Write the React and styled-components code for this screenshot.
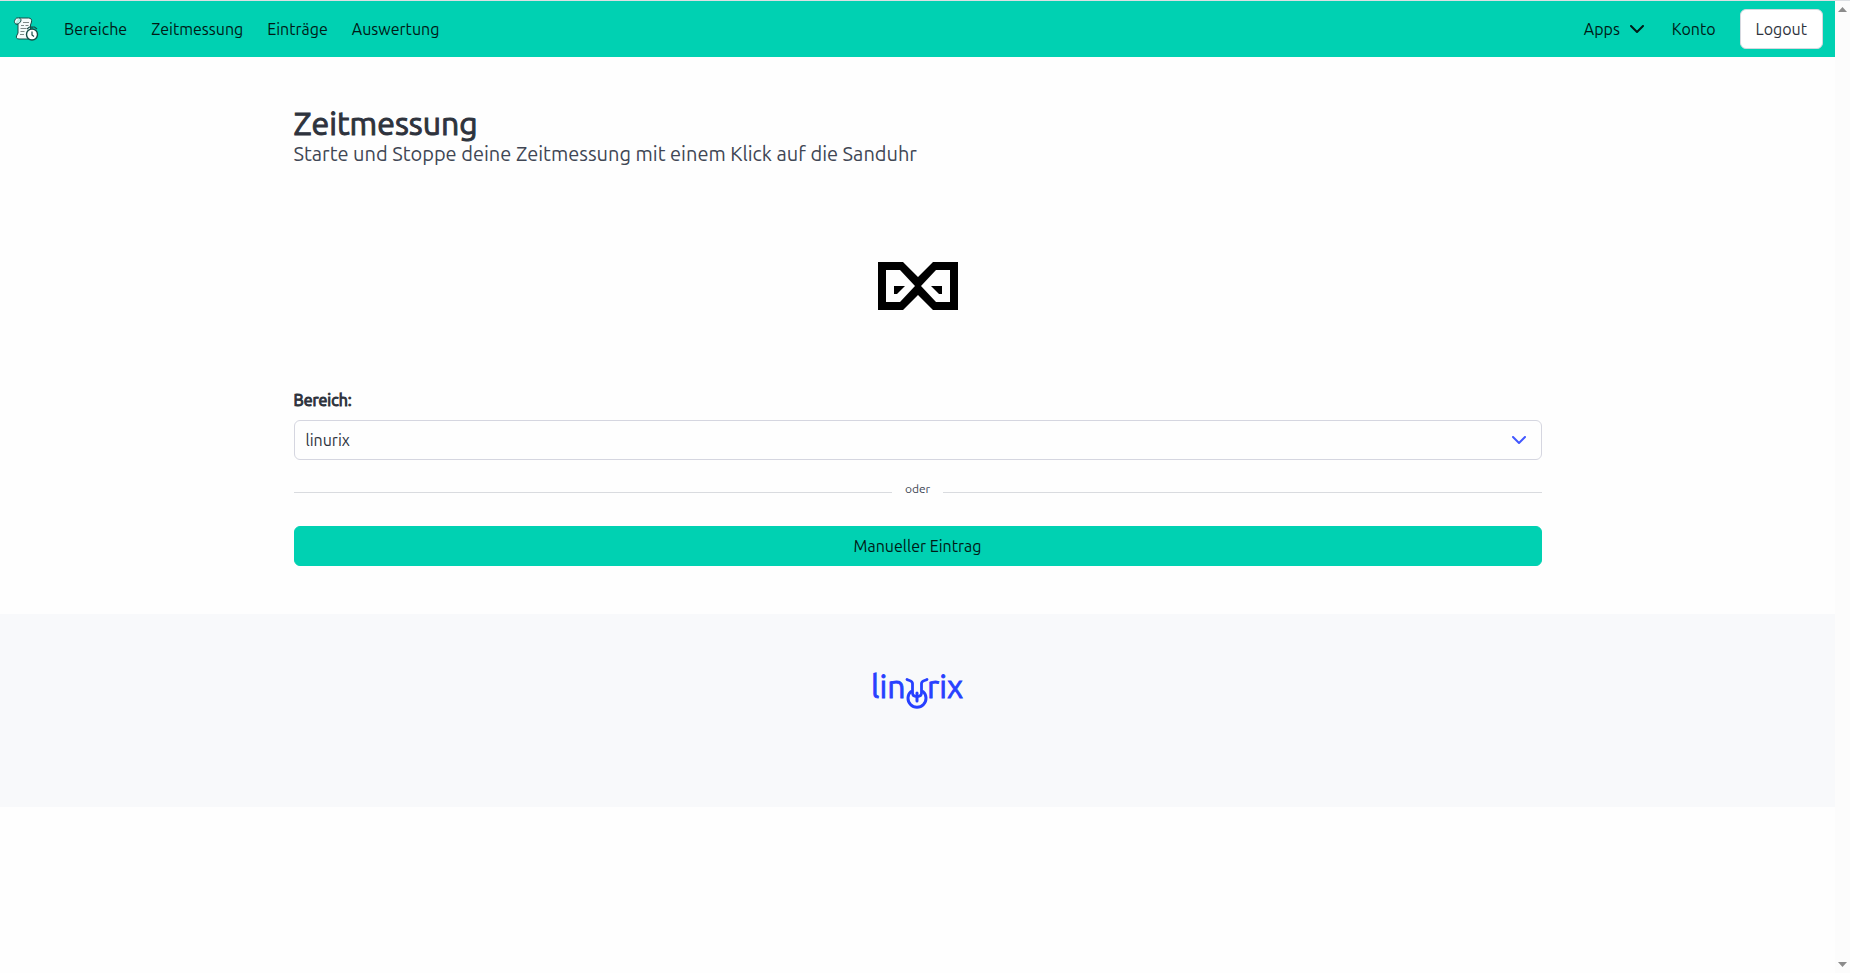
import { useState } from "react";
import styled, { createGlobalStyle } from "styled-components";

const GlobalStyle = createGlobalStyle`
  *, *::before, *::after {
    box-sizing: border-box;
  }

  body {
    margin: 0;
    background: #fefefe;
    color: #404654;
    font-family: "Ubuntu", "Open Sans", "Noto Sans", sans-serif;
    font-size: 16px;
    line-height: 24px;
  }

  button, select {
    font: inherit;
  }
`;

const Shell = styled.div`
  display: flex;
  min-height: 100vh;
  border-top: 1px solid #dcdfe3;
`;

const Page = styled.div`
  flex: 1;
  min-width: 0;
`;

const ScrollTrack = styled.div`
  display: flex;
  flex-direction: column;
  justify-content: space-between;
  align-items: center;
  width: 15px;
  padding: 6px 0;
  background: #fcfcfc;
`;

const Navbar = styled.nav`
  display: flex;
  justify-content: space-between;
  min-height: 56px;
  background: #00d1b2;
`;

const NavGroup = styled.div`
  display: flex;
  align-items: center;
`;

const Brand = styled.a`
  display: flex;
  padding: 0 12px;
`;

const NavLink = styled.a`
  display: flex;
  align-items: center;
  gap: 10px;
  padding: 8px ${(props) => (props.$dropdown ? "16px" : "12px")} 8px 12px;
  color: #001a16;
  text-decoration: none;
`;

const Button = styled.button`
  height: 40px;
  padding: 0 15px;
  border: 1px solid ${(props) => (props.$primary ? "#00d1b2" : "#d5d8df")};
  border-radius: 6px;
  background: ${(props) => (props.$primary ? "#00d1b2" : "#fff")};
  color: ${(props) => (props.$primary ? "#001a16" : "#2e333d")};
  width: ${(props) => (props.$full ? "100%" : "auto")};
  cursor: pointer;
`;

const LogoutItem = styled.div`
  padding: 0 12px;
`;

const Section = styled.main`
  max-width: 1344px;
  margin: 0 auto;
  padding: 48px;
`;

const Title = styled.h1`
  margin: 0;
  color: #2e333d;
  font-size: 32px;
  font-weight: 400;
  line-height: 36px;
  -webkit-text-stroke: 1px currentColor;
`;

const Subtitle = styled.p`
  margin: 0;
  font-size: 20px;
  line-height: 25px;
`;

const TimerButton = styled.button`
  display: block;
  margin: 72px auto 54px;
  padding: 24px;
  border: 0;
  background: none;
  cursor: pointer;

  svg {
    display: block;
  }
`;

const Label = styled.label`
  display: block;
  margin-bottom: 8px;
  color: #2e333d;
  -webkit-text-stroke: 1px currentColor;
`;

const SelectWrap = styled.div`
  position: relative;

  svg {
    position: absolute;
    top: 16px;
    right: 16px;
    pointer-events: none;
  }
`;

const Select = styled.select`
  display: block;
  width: 100%;
  height: 40px;
  padding: 0 40px 0 11px;
  border: 1px solid #d5d6e0;
  border-radius: 6px;
  background: #fefefe;
  color: #2e333d;
  appearance: none;
`;

const Divider = styled.div`
  display: flex;
  align-items: center;
  gap: 13px;
  margin: 20px 0 28px;
  font-size: 12px;
  line-height: 18px;

  &::before,
  &::after {
    content: "";
    flex: 1;
    height: 1px;
    margin-top: 6px;
    background: #d9dbdf;
  }
`;

const Footer = styled.footer`
  display: flex;
  justify-content: center;
  padding: 48px 24px 96px;
  background: #f8f9fb;

  svg {
    display: block;
  }
`;

const links = ["Bereiche", "Zeitmessung", "Einträge", "Auswertung"];

function Chevron({ color }) {
  return (
    <svg width="14" height="9" viewBox="0 0 14 9" fill="none" aria-hidden="true">
      <path d="M1 1l6 6 6-6" stroke={color} strokeWidth="2" strokeLinecap="round" strokeLinejoin="round" />
    </svg>
  );
}

function ScrollArrow({ down }) {
  return (
    <svg width="9" height="5" viewBox="0 0 9 5" aria-hidden="true">
      <path d={down ? "M0 0h9L4.500 5z" : "M0 5h9L4.500 0z"} fill="#8b8b8b" />
    </svg>
  );
}

function BrandIcon() {
  return (
    <svg width="28" height="28" viewBox="0 0 28 28" fill="none" aria-hidden="true">
      <path
        d="M5 3h11.500c2.500 0 3.500 1.500 3 4l-1 3v12c0 1.500-1 2-2.500 2H7c-2 0-3-1-2.500-3L6 18V9C3 9.500 1.500 7 3 5c.5-1 1-2 2-2z"
        fill="#f4fbfa"
        stroke="#164c46"
        strokeWidth="1"
      />
      <path d="M3 8.500c2 1.500 6-.5 6-3.500 0-1-1-2-2-2" fill="#b9eee6" stroke="#164c46" />
      <path d="M11 7.500h6M9 10.500h3m1.500 0h3M8.500 13.500h6M8.500 16.500h4M8 19.500h4" stroke="#7d8886" strokeWidth="1" />
      <circle cx="20" cy="19.500" r="5.500" fill="#fff" stroke="#164c46" strokeWidth="1.400" />
      <path d="M20 16.500v3.500l2 1.500M15 14l2.500-2h5l2.500 2M20 11.500v2" stroke="#164c46" strokeWidth="1.200" />
    </svg>
  );
}

function Hourglass() {
  return (
    <svg width="80" height="48" viewBox="0 0 80 48" aria-hidden="true">
      <path
        fill="#000"
        fillRule="evenodd"
        d="M0 0h25l15 15L55 0h25v48H55L40 33 25 48H0zM8 8v32h14l15-16L22 8zM72 8H58L43 24l15 16h14z"
      />
      <path fill="#000" d="M16 24h11l-8 8h-3zM64 24H53l8 8h3z" />
    </svg>
  );
}

function LinurixLogo() {
  return (
    <svg width="96" height="49" viewBox="0 0 96 49" role="img" aria-label="linurix">
      <g
        fill="#2740ff"
        stroke="#2740ff"
        strokeWidth="0.800"
        fontFamily='"Ubuntu", "Open Sans", sans-serif'
        fontSize="32"
      >
        <text x="1" y="36">lin</text>
        <text x="57" y="36">rix</text>
      </g>
      <g fill="none" stroke="#2740ff" strokeLinecap="round">
        <path
          d="M37 17.500c2.500 1.500 5.500 1 5.500 4v9.500c0 2.500 1.500 3.500 4.500 3.500s4.500-1 4.500-3.500v-9.500c0-3 3-2.500 5.500-4"
          strokeWidth="2.800"
        />
        <path d="M41 29.500a9 9 0 1 0 12 0" strokeWidth="3" />
        <path d="M47 31v8" strokeWidth="3" />
      </g>
    </svg>
  );
}

function App() {
  const [area, setArea] = useState("linurix");
  const [running, setRunning] = useState(false);

  return (
    <>
      <GlobalStyle />
      <Shell>
        <Page>
          <Navbar>
            <NavGroup>
              <Brand href="#" aria-label="Start">
                <BrandIcon />
              </Brand>
              {links.map((link) => (
                <NavLink href="#" key={link}>
                  {link}
                </NavLink>
              ))}
            </NavGroup>
            <NavGroup>
              <NavLink href="#" $dropdown>
                Apps <Chevron color="#001a16" />
              </NavLink>
              <NavLink href="#">Konto</NavLink>
              <LogoutItem>
                <Button>Logout</Button>
              </LogoutItem>
            </NavGroup>
          </Navbar>

          <Section>
            <Title>Zeitmessung</Title>
            <Subtitle>Starte und Stoppe deine Zeitmessung mit einem Klick auf die Sanduhr</Subtitle>

            <TimerButton aria-label="Zeitmessung" aria-pressed={running} onClick={() => setRunning(!running)}>
              <Hourglass />
            </TimerButton>

            <Label htmlFor="area">Bereich:</Label>
            <SelectWrap>
              <Select id="area" value={area} onChange={(e) => setArea(e.target.value)}>
                <option value="linurix">linurix</option>
              </Select>
              <Chevron color="#4258ff" />
            </SelectWrap>

            <Divider>oder</Divider>
            <Button $primary $full>
              Manueller Eintrag
            </Button>
          </Section>

          <Footer>
            <LinurixLogo />
          </Footer>
        </Page>
        <ScrollTrack>
          <ScrollArrow />
          <ScrollArrow down />
        </ScrollTrack>
      </Shell>
    </>
  );
}

export default App;
